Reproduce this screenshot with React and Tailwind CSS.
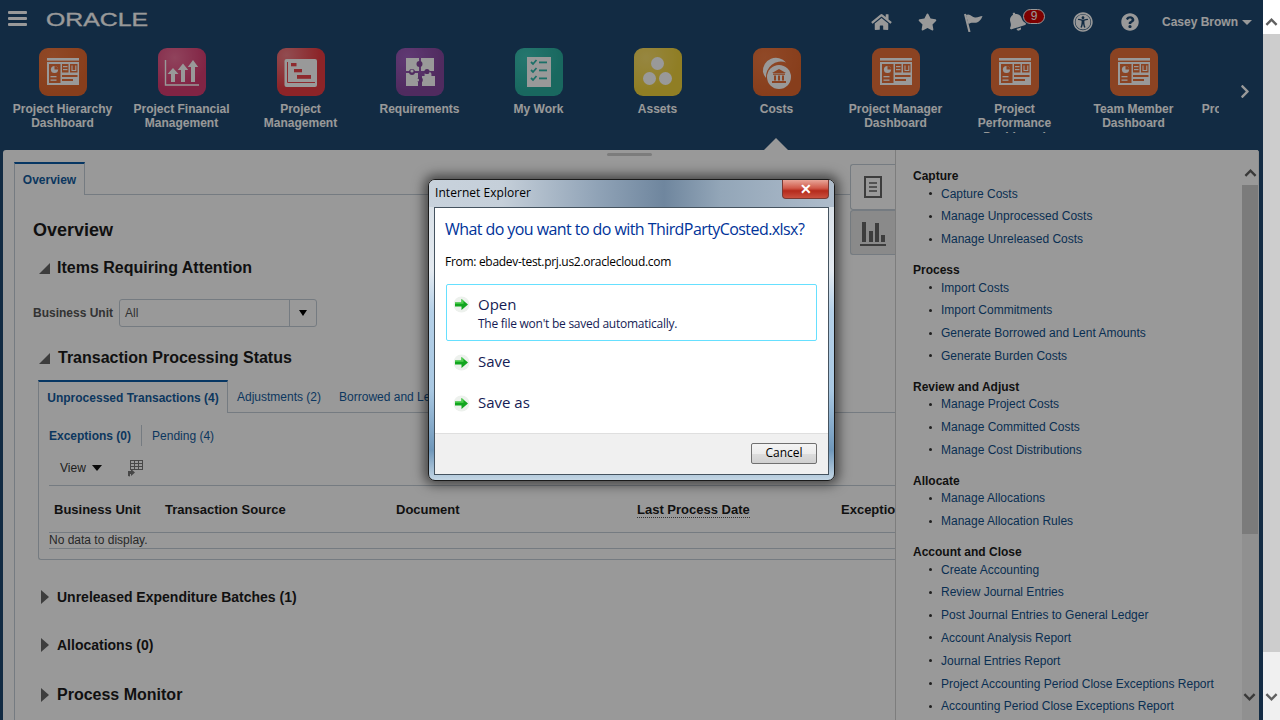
import React from "react";
import { FaHome, FaStar, FaBell, FaUniversalAccess, FaQuestionCircle, FaChevronRight } from "react-icons/fa";

const DashGlyph = () => (
  <svg viewBox="0 0 48 48" className="w-12 h-12">
    <rect x="8" y="10" width="32" height="2.6" fill="#fff" />
    <rect x="8" y="14" width="32" height="23" fill="#fff" />
    <rect x="10" y="16" width="11.5" height="19" fill="#e8703a" />
    <circle cx="15.5" cy="21.5" r="3.6" fill="#fff" />
    <path d="M15.5 21.5V18a3.6 3.6 0 0 1 3.6 3.5z" fill="#e8703a" />
    <rect x="11.5" y="28" width="6" height="1.3" fill="#fff" />
    <rect x="11.5" y="31.5" width="6" height="1.3" fill="#fff" />
    <rect x="23" y="16" width="6.5" height="8.5" fill="#e8703a" />
    <rect x="24" y="18" width="4.5" height="1.2" fill="#fff" />
    <rect x="24" y="21" width="4.5" height="1.2" fill="#fff" />
    <rect x="31" y="16" width="7.5" height="8.5" fill="#e8703a" />
    <path d="M33 17.5v5h3.8v-5" fill="none" stroke="#fff" strokeWidth="1.1" />
    <rect x="23" y="27" width="15.5" height="2" fill="#e8703a" />
    <rect x="23" y="31" width="11" height="2" fill="#e8703a" />
  </svg>
);
const FinGlyph = () => (
  <svg viewBox="0 0 48 48" className="w-12 h-12">
    <path d="M7.500 12v25h33.500" fill="none" stroke="#fff" strokeWidth="1.400" />
    <path d="M13 34v-8h-3.500L15 20l5.500 6H17v8z" fill="#fff" />
    <path d="M23 34V22h-3.200L25 15.500 30.200 22H27v12z" fill="#fff" />
    <path d="M33 34V19h-3.200L35 12l5.200 7H37v15z" fill="#fff" />
  </svg>
);
const GanttGlyph = () => (
  <svg viewBox="0 0 48 48" className="w-12 h-12">
    <rect x="7.500" y="11" width="32.500" height="28" rx="2" fill="#fff" />
    <path d="M10.500 14v20.500H38" fill="none" stroke="#ed464d" strokeWidth="1" />
    <rect x="14" y="15" width="5.500" height="3.300" fill="#ed464d" />
    <rect x="17" y="21" width="8" height="3.300" fill="#ed464d" />
    <rect x="20" y="27" width="14" height="3.800" fill="#ed464d" />
  </svg>
);
const PuzzleGlyph = () => (
  <svg viewBox="0 0 48 48" className="w-12 h-12">
    <rect x="10" y="10" width="13" height="13" fill="#fff" />
    <rect x="25" y="10" width="13" height="13" fill="#fff" />
    <rect x="10" y="25" width="12" height="13" fill="#fff" />
    <rect x="26" y="28" width="13" height="10" fill="#fff" />
    <circle cx="32" cy="27" r="3.500" fill="#fff" />
    <circle cx="23.500" cy="16" r="3" fill="#86489f" />
    <circle cx="29" cy="16" r="2.200" fill="#fff" />
    <circle cx="16" cy="24" r="3" fill="#86489f" />
    <circle cx="16" cy="23" r="1.600" fill="#fff" />
    <circle cx="31" cy="23.500" r="2.600" fill="#86489f" />
    <circle cx="24" cy="32" r="2.800" fill="#86489f" />
    <circle cx="21.500" cy="32" r="1.600" fill="#fff" />
  </svg>
);
const ListGlyph = () => (
  <svg viewBox="0 0 48 48" className="w-12 h-12">
    <rect x="12" y="9" width="24" height="30" fill="#fff" />
    {[14, 22, 30].map((y) => (
      <g key={y}>
        <path d={`M16 ${y}l2 2 3.500-4`} fill="none" stroke="#30bbad" strokeWidth="1.800" />
        <rect x="24" y={y - 0.5} width="8" height="1.800" fill="#30bbad" />
      </g>
    ))}
  </svg>
);
const DotsGlyph = () => (
  <svg viewBox="0 0 48 48" className="w-12 h-12">
    <circle cx="23.500" cy="15.500" r="6.500" fill="#fff" />
    <circle cx="15.500" cy="30.500" r="6.500" fill="#fff" />
    <circle cx="31.500" cy="30.500" r="6.500" fill="#fff" />
  </svg>
);
const CostGlyph = () => (
  <svg viewBox="0 0 48 48" className="w-12 h-12">
    <path d="M10 24A13 13 0 0 1 33 14.500 15 15 0 0 0 13 30 13 13 0 0 1 10 24z" fill="#fff" />
    <circle cx="26" cy="29" r="12" fill="#fff" />
    <path d="M26 21l7 4H19z" fill="#e8703a" />
    <rect x="20" y="25.500" width="12" height="1.300" fill="#e8703a" />
    <rect x="21" y="27.500" width="2" height="5" fill="#e8703a" />
    <rect x="25" y="27.500" width="2" height="5" fill="#e8703a" />
    <rect x="29" y="27.500" width="2" height="5" fill="#e8703a" />
    <rect x="19" y="33" width="14" height="2" fill="#e8703a" />
  </svg>
);

const navItems = [
  { label: "Project Hierarchy Dashboard", tile: "bg-[radial-gradient(circle_at_30%_20%,#f07a42,#e2682f_70%)]", G: DashGlyph },
  { label: "Project Financial Management", tile: "bg-[radial-gradient(circle_at_35%_20%,#f0709a,#d83c72_65%)]", G: FinGlyph },
  { label: "Project Management", tile: "bg-[radial-gradient(circle_at_20%_15%,#f28086,#e93c44_60%)]", G: GanttGlyph },
  { label: "Requirements", tile: "bg-[radial-gradient(circle_at_25%_20%,#a060c0,#86489f_65%)]", G: PuzzleGlyph },
  { label: "My Work", tile: "bg-[radial-gradient(circle_at_25%_20%,#3ec6b8,#2aae9f_65%)]", G: ListGlyph },
  { label: "Assets", tile: "bg-[radial-gradient(circle_at_25%_20%,#fbe06c,#f0d23c_65%)]", G: DotsGlyph },
  { label: "Costs", tile: "bg-[radial-gradient(circle_at_25%_20%,#f07a42,#e2682f_70%)]", G: CostGlyph },
  { label: "Project Manager Dashboard", tile: "bg-[#e8703a]", G: DashGlyph },
  { label: "Project Performance Dashboard", tile: "bg-[#e8703a]", G: DashGlyph },
  { label: "Team Member Dashboard", tile: "bg-[#e8703a]", G: DashGlyph },
  { label: "Project Execution", tile: "hidden", G: null },
];

const sections = [
  ["Capture", ["Capture Costs", "Manage Unprocessed Costs", "Manage Unreleased Costs"]],
  ["Process", ["Import Costs", "Import Commitments", "Generate Borrowed and Lent Amounts", "Generate Burden Costs"]],
  ["Review and Adjust", ["Manage Project Costs", "Manage Committed Costs", "Manage Cost Distributions"]],
  ["Allocate", ["Manage Allocations", "Manage Allocation Rules"]],
  ["Account and Close", ["Create Accounting", "Review Journal Entries", "Post Journal Entries to General Ledger", "Account Analysis Report", "Journal Entries Report", "Project Accounting Period Close Exceptions Report", "Accounting Period Close Exceptions Report"]],
];

const Chevron = ({ up, className }) => (
  <svg viewBox="0 0 14 10" className={className}>
    <path d={up ? "M1.500 8L7 2.500 12.500 8" : "M1.500 2L7 7.500 12.500 2"} fill="none" stroke="currentColor" strokeWidth="2.600" />
  </svg>
);

const GreenArrow = () => (
  <svg viewBox="0 0 17 17" className="w-[17px] h-[17px] shrink-0">
    <circle cx="8.500" cy="8.500" r="8" fill="#edf1ed" />
    <path d="M2 6.500h6.500V3l6.500 5.500L8.500 14v-3.500H2z" fill="#12a51f" />
    <path d="M2 6.500h6.500V3l2 1.700v3H2z" fill="#4fd04f" />
  </svg>
);

const CollapseOpen = () => <span className="w-0 h-0 border-b-[11px] border-l-[11px] border-b-[#666] border-l-transparent" />;
const CollapseShut = () => <span className="w-0 h-0 border-y-[7px] border-l-[8px] border-y-transparent border-l-[#666]" />;

export default function App() {
  return (
    <div className="relative w-[1280px] h-[720px] overflow-hidden flex font-['Liberation_Sans',Arial,sans-serif]">
      {/* page */}
      <div className="relative w-[1263px] h-full bg-[#1e4971] flex flex-col overflow-hidden">
        {/* top bar */}
        <div className="h-[44px] shrink-0 flex items-center text-white">
          <div className="ml-[8px] w-[19px] h-[15px] flex flex-col justify-between mb-[7px]">
            <span className="h-[3px] bg-white rounded-[1px]" />
            <span className="h-[3px] bg-white rounded-[1px]" />
            <span className="h-[3px] bg-white rounded-[1px]" />
          </div>
          <svg viewBox="0 0 110 18" className="ml-[19px] mb-[7px] w-[110px] h-[18px]">
            <text x="0" y="15.500" fontSize="18.500" fill="#fff" stroke="#fff" strokeWidth="0.300" textLength="102" lengthAdjust="spacingAndGlyphs" fontFamily="Liberation Sans">ORACLE</text>
          </svg>
          <div className="ml-auto flex items-center h-full relative">
            <FaHome className="absolute left-[-9px] w-[21px] h-[18px]" />
          </div>
          <div className="flex items-center h-full w-[382px] mr-[1px] shrink-0">
            <span className="w-[20px] ml-[37px] flex justify-center"><FaStar className="w-[19px] h-[18px]" /></span>
            <svg viewBox="0 0 20 20" className="ml-[26px] w-[20px] h-[20px]">
              <path d="M2 2l4.500 18" stroke="#fff" strokeWidth="2" fill="none" />
              <path d="M3 3c4-2 6 2 9 2.500 3 .3 5-1.500 7.500-1.500-1 3-3 5.500-5.500 6.500-3 1-5-1-8.500 1.500z" fill="#fff" />
            </svg>
            <div className="relative ml-[25px] w-[20px] h-[20px]">
              <FaBell className="w-[17px] h-[19px] -rotate-[18deg]" />
              <span className="absolute left-[15px] top-[-3px] w-[22px] h-[15px] rounded-full bg-[#d00000] border border-white text-[12px] leading-[13px] text-center">9</span>
            </div>
            <span className="ml-[45px] w-[20px] flex justify-center"><FaUniversalAccess className="w-[20px] h-[20px]" /></span>
            <span className="ml-[27px] w-[20px] flex justify-center"><FaQuestionCircle className="w-[18px] h-[18px]" /></span>
            <span className="ml-[22px] text-[12px] font-bold whitespace-nowrap">Casey Brown</span>
            <span className="ml-[4px] w-0 h-0 border-t-[5px] border-x-[5px] border-t-white border-x-transparent" />
          </div>
        </div>
        {/* nav row */}
        <div className="h-[106px] shrink-0 relative flex pt-[4px]">
          <div className="ml-[3px] w-[1216px] h-[85px] flex overflow-hidden">
            {navItems.map(({ label, tile, G }) => (
              <div key={label} className="w-[119px] shrink-0 flex flex-col items-center">
                <div className={`w-12 h-12 rounded-[9px] shrink-0 ${G ? tile : "opacity-0"}`}>{G && <G />}</div>
                <div className="mt-[6px] w-[110px] text-center text-[12px] leading-[14px] font-bold text-white">{label}</div>
              </div>
            ))}
          </div>
          <FaChevronRight className="ml-[20px] mt-[36px] w-[12px] h-[15px] text-white" />
          <span className="absolute left-[764px] top-[94px] w-0 h-0 border-b-[12px] border-x-[12px] border-b-white border-x-transparent" />
        </div>
        {/* main panel */}
        <div className="relative ml-[3px] w-[1256px] flex-1 min-h-0 bg-white rounded-t-[3px] flex overflow-hidden">
          <span className="absolute left-[604px] top-[3px] w-[45px] h-[3px] rounded-full bg-[#cfcfcf]" />
          {/* left */}
          <div className="relative w-[892px] shrink-0 overflow-hidden pl-[11px] pt-[12px] text-[#1c1c1c]">
            <div className="flex border-b border-[#c4ced7] h-[33px] w-[850px]">
              <div className="w-[71px] border-t-2 border-t-[#0b5aa5] border-x border-x-[#c4ced7] bg-white h-[33px] text-[12px] font-bold text-[#145c9e] flex items-center justify-center">Overview</div>
            </div>
            <div className="border-l border-[#c4ced7] pl-[18px] h-[600px]">
              <h1 className="pt-[23px] h-[47px] text-[18px] leading-[24px] font-bold">Overview</h1>
              <div className="mt-[14px] h-[24px] flex items-center ml-[6px] gap-[7px]"><CollapseOpen /><h2 className="text-[16px] font-bold">Items Requiring Attention</h2></div>
              <div className="mt-[19px] h-[28px] flex items-center">
                <span className="text-[12px] font-bold text-[#555]">Business Unit</span>
                <div className="ml-[6px] w-[198px] h-[28px] border border-[#c4ced7] rounded-[3px] flex items-center">
                  <span className="pl-[5px] flex-1 text-[12px] text-[#555]">All</span>
                  <span className="w-[27px] h-full border-l border-[#c4ced7] flex items-center justify-center"><span className="w-0 h-0 border-t-[6px] border-x-[4.5px] border-t-black border-x-transparent" /></span>
                </div>
              </div>
              <div className="mt-[19px] h-[24px] flex items-center ml-[6px] gap-[8px]"><CollapseOpen /><h2 className="text-[16px] font-bold">Transaction Processing Status</h2></div>
              {/* tabs */}
              <div className="mt-[10px] ml-[5px] flex h-[33px] border-b border-[#c4ced7] text-[12px] text-[#145c9e] whitespace-nowrap">
                <div className="w-[190px] h-[33px] border-t-2 border-t-[#0b5aa5] border-x border-x-[#c4ced7] bg-white font-bold flex items-center justify-center">Unprocessed Transactions (4)</div>
                <div className="ml-[9px] pt-[2px] flex items-center">Adjustments (2)</div>
                <div className="ml-[18px] pt-[2px] flex items-center">Borrowed and Lent Amounts</div>
              </div>
              <div className="ml-[5px] border-l border-b border-[#c4ced7] rounded-bl-[3px] h-[147px] pl-[10px] pr-0">
                <div className="pt-[12px] h-[33px] flex items-center text-[12px]">
                  <span className="font-bold text-[#145c9e]">Exceptions (0)</span>
                  <span className="ml-[10px] w-px h-[21px] bg-[#c4ced7]" />
                  <span className="ml-[10px] text-[#145c9e]">Pending (4)</span>
                </div>
                <div className="mt-[11px] h-[22px] flex items-center text-[12px] text-[#333] pl-[11px]">
                  <span>View</span>
                  <span className="ml-[6px] w-0 h-0 border-t-[6px] border-x-[5px] border-t-[#111] border-x-transparent" />
                  <svg viewBox="0 0 16 17" className="ml-[25px] w-[16px] h-[17px]">
                    <g fill="none" stroke="#777" strokeWidth="1"><rect x="3.500" y=".5" width="12" height="9" /><path d="M3.500 3.500h12M3.500 6.500h12M7.500.5v9M11.500.5v9" /></g>
                    <path d="M1 16v-5h3V9l4 3.500-4 3.500v-2H3v2.500z" fill="#777" />
                  </svg>
                </div>
                <div className="mt-[6px] border-t border-[#c4ced7]">
                  <div className="flex h-[47px] pt-[1px] items-center border-b border-[#c4ced7] text-[13px] font-bold whitespace-nowrap text-[#1c1c1c]">
                    <span className="ml-[5px] w-[111px] shrink-0">Business Unit</span>
                    <span className="w-[231px] shrink-0">Transaction Source</span>
                    <span className="w-[241px] shrink-0">Document</span>
                    <span className="w-[204px] shrink-0"><span className="border-b border-dotted border-[#555]">Last Process Date</span></span>
                    <span className="shrink-0">Exception</span>
                  </div>
                  <div className="h-[16px] pb-[2px] flex items-center border-b border-[#c4ced7] text-[12px] text-[#444]">No data to display.</div>
                </div>
              </div>
              <div className="mt-[27px] h-[20px] flex items-center gap-[8px] ml-[8px]"><CollapseShut /><h3 className="text-[14px] font-bold">Unreleased Expenditure Batches (1)</h3></div>
              <div className="mt-[28px] h-[20px] flex items-center gap-[8px] ml-[8px]"><CollapseShut /><h3 className="text-[14px] font-bold">Allocations (0)</h3></div>
              <div className="mt-[28px] h-[24px] flex items-center gap-[8px] ml-[8px]"><CollapseShut /><h2 className="text-[16px] font-bold">Process Monitor</h2></div>
            </div>
            {/* side tabs */}
            <div className="absolute right-0 top-[14px] w-[45px] flex flex-col">
              <div className="h-[46px] bg-white border border-r-0 border-[#c4ced7] rounded-l-[3px] flex items-center justify-center">
                <svg viewBox="0 0 18 22" className="w-[18px] h-[22px]"><rect x="1" y="1" width="16" height="20" fill="none" stroke="#666" strokeWidth="2" /><path d="M5 7h8M5 11h8M5 15h8" stroke="#666" strokeWidth="1.500" /></svg>
              </div>
              <div className="h-[45px] bg-[#e6e6e6] border border-r-0 border-[#c4ced7] rounded-l-[3px] flex items-center justify-center">
                <svg viewBox="0 0 26 26" className="w-[26px] h-[26px]"><rect x="2" y="2" width="4" height="20" fill="#666" /><rect x="9" y="11" width="4" height="11" fill="#666" /><rect x="15" y="3" width="4" height="19" fill="#666" /><rect x="21" y="15" width="4" height="7" fill="#666" /><rect x="0" y="24" width="26" height="2" fill="#666" /></svg>
              </div>
            </div>
          </div>
          {/* right */}
          <div className="flex-1 min-w-0 border-l border-[#d0d0d0] overflow-hidden pl-[17px] pt-[19.200px] flex flex-col gap-[12.600px]">
            {sections.map(([title, links]) => (
              <div key={title} className="shrink-0">
                <div className="h-[13px] text-[12px] leading-[14px] font-bold text-[#1c1c1c]">{title}</div>
                {links.map((l) => (
                  <div key={l} className="h-[22.800px] flex items-center pl-[16px] text-[12px] text-[#0f4f8a] whitespace-nowrap">
                    <span className="w-[3px] h-[3px] rounded-full bg-[#333] mr-[9px]" />
                    {l}
                  </div>
                ))}
              </div>
            ))}
          </div>
          {/* panel scrollbar */}
          <div className="w-[17px] shrink-0 bg-[#f0f0f0] flex flex-col relative pr-[1px]">
            <div className="h-[35px] bg-white flex items-start justify-center pt-[18px] text-[#606060]"><Chevron up className="w-[13px] h-[10px]" /></div>
            <div className="h-[349px] bg-[#cdcdcd]" />
            <div className="absolute bottom-[18px] left-[1px] text-[#606060]"><Chevron className="w-[13px] h-[10px]" /></div>
          </div>
        </div>
        <div className="absolute inset-0 bg-black/40" />
      </div>
      {/* window scrollbar */}
      <div className="w-[17px] h-full bg-[#f0f0f0] flex flex-col relative">
        <div className="h-[34px] bg-white flex items-start justify-center pt-[17px] text-[#606060]"><Chevron up className="w-[13px] h-[10px]" /></div>
        <div className="h-[618px] bg-[#cdcdcd]" />
        <div className="absolute bottom-[18px] left-[2px] text-[#606060]"><Chevron className="w-[13px] h-[10px]" /></div>
      </div>
      {/* dialog */}
      <div className="absolute left-[428px] top-[179px] w-[407px] h-[302px] rounded-[7px] border border-[#1a1a1a] shadow-[0_0_12px_4px_rgba(0,0,0,0.55)] bg-[linear-gradient(180deg,#d5dde4_0%,#e4eaf0_30%,#b4d0e8_44%,#a9c8e2_70%,#6f97ba_90%,#c4d6e4_100%)] font-['Open_Sans','Noto_Sans',sans-serif]">
        <div className="relative h-[27px] rounded-t-[6px] flex items-center pl-[6px] pb-[1px] bg-[linear-gradient(90deg,#c8d2dc_0%,#c5cfd9_18%,#8fa2b6_42%,#6f869e_58%,#93a6b8_72%,#aebccb_100%)]">
          <span className="text-[12px] text-black tracking-[0.05px]">Internet Explorer</span>
          <span className="absolute right-[5px] top-0 w-[47px] h-[19px] rounded-b-[4px] border border-[#7a3a34] border-t-0 flex items-center justify-center text-white text-[14px] font-bold leading-none bg-[linear-gradient(180deg,#e8a598_0%,#d05a4a_45%,#b52a1c_60%,#c9503f_100%)]">✕</span>
        </div>
        <div className="ml-[5px] mr-[5px] h-[268px] border border-[#45535f] bg-white flex flex-col">
          <div className="pl-[10px] mt-[10px] h-[22px] flex items-center text-[#003399] text-[16px] tracking-[-0.57px] whitespace-nowrap">What do you want to do with ThirdPartyCosted.xlsx?</div>
          <div className="pl-[10px] mt-[12px] h-[20px] flex items-center text-[12px] tracking-[-0.3px] text-black">From: ebadev-test.prj.us2.oraclecloud.com</div>
          <div className="mt-[12px] mx-[11px] h-[57px] border border-[#66e0ff] rounded-[2px] flex pl-[6px] pt-[11px]">
            <GreenArrow />
            <div className="ml-[8px] flex flex-col -mt-[2px]">
              <span className="text-[15px] leading-[20px] text-[#151c55]">Open</span>
              <span className="mt-[1px] text-[12px] leading-[17px] tracking-[-0.25px] text-[#151c55]">The file won't be saved automatically.</span>
            </div>
          </div>
          <div className="mt-[11px] ml-[18px] h-[20px] flex items-center"><GreenArrow /><span className="ml-[8px] mb-[1px] text-[15px] text-[#151c55]">Save</span></div>
          <div className="mt-[21px] ml-[18px] h-[20px] flex items-center"><GreenArrow /><span className="ml-[8px] mb-[1px] text-[15px] text-[#151c55]">Save as</span></div>
          <div className="mt-auto h-[41px] bg-[#f0f0f0] border-t border-[#dfdfdf] flex items-center justify-end pr-[11px] pb-[2px]">
            <span className="w-[66px] h-[21px] border border-[#707070] rounded-[2px] text-[12px] flex items-center justify-center text-black bg-[linear-gradient(180deg,#f4f4f4_0%,#ececec_50%,#dcdcdc_55%,#d0d0d0_100%)]">Cancel</span>
          </div>
        </div>
      </div>
    </div>
  );
}
